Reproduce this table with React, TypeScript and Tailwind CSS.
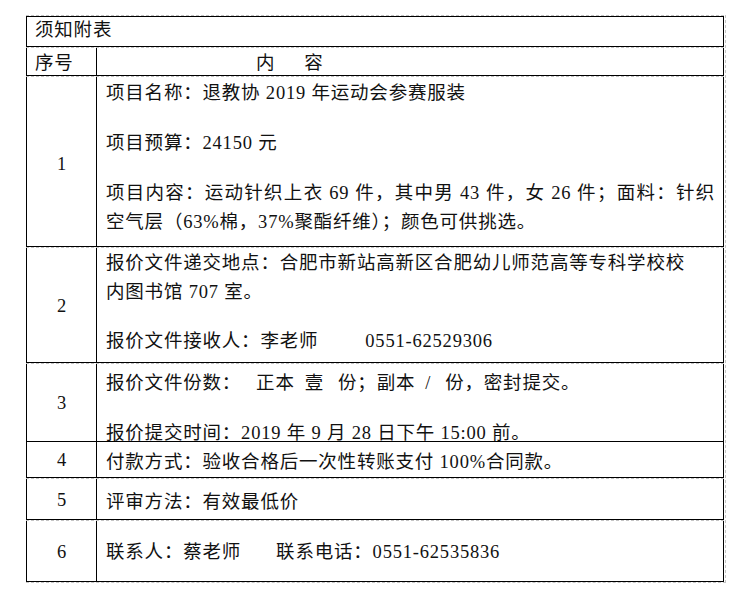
import React from 'react';

// one row: sequence number on the left, content on the right
const Row: React.FC<{
  num: string;
  h: string;
  numPad: string;
  textPad: string;
  last?: boolean;
  children: React.ReactNode;
}> = ({ num, h, numPad, textPad, last, children }) => (
  <div className={`flex ${h} ${last ? '' : 'border-b border-black'}`}>
    <div className={`w-[69px] shrink-0 flex items-center justify-center leading-[29px] tracking-normal ${numPad}`}>{num}</div>
    <div className={`flex-1 border-l border-black pl-[9px] pr-[8px] leading-[29px] ${textPad}`}>{children}</div>
  </div>
);

const Group: React.FC<{ first?: boolean; children: React.ReactNode }> = ({ first, children }) => (
  <div className="border-t border-dashed border-[#c4c4c4]">
    <div className={`border-x border-b border-black ${first ? 'border-t' : ''}`}>{children}</div>
  </div>
);

const Blank: React.FC<{ h?: string }> = ({ h = 'h-[21px]' }) => <div className={h}></div>;

export default function App() {
  return (
    <div className="min-h-screen bg-white pt-[15px] pl-[26px] text-[18.5px] tracking-[0.8px] text-[#111] font-['Liberation_Serif','Noto_Sans_CJK_SC',serif]">
      <div className="w-[700px] border-r border-b border-dashed border-[#c4c4c4] pr-px">
        {/* title */}
        <Group first>
          <div className="h-[29px] pl-[8px] leading-[27px]">须知附表</div>
        </Group>

        {/* column header */}
        <Group>
          <div className="flex h-[27px]">
            <div className="w-[69px] shrink-0 pl-[8px] pt-[1px] leading-[29px]">序号</div>
            <div className="flex-1 border-l border-black pl-[159px] pt-[1px] leading-[29px]">
              内<span className="ml-[29px]">容</span>
            </div>
          </div>
        </Group>

        <Group>
          <Row num="1" h="h-[169px]" numPad="pt-[5px]" textPad="pt-[2px]" last>
            <div>项目名称：退教协 2019 年运动会参赛服装</div>
            <Blank />
            <div>项目预算：24150 元</div>
            <Blank />
            <div className="text-justify [text-align-last:justify]">
              项目内容：运动针织上衣 69 件，其中男 43 件，女 26 件；面料：针织
            </div>
            <div>空气层（63%棉，37%聚酯纤维）；颜色可供挑选。</div>
          </Row>
        </Group>

        <Group>
          <Row num="2" h="h-[114px]" numPad="pt-[2px]" textPad="pt-[1px]" last>
            <div>报价文件递交地点：合肥市新站高新区合肥幼儿师范高等专科学校校</div>
            <div>内图书馆 707 室。</div>
            <Blank h="h-[20px]" />
            <div>
              报价文件接收人：李老师<span className="ml-[47px]">0551-62529306</span>
            </div>
          </Row>
        </Group>

        <Group>
          <Row num="3" h="h-[78px]" numPad="pt-[2px]" textPad="pt-[5px]">
            <div className="whitespace-nowrap">
              报价文件份数：<span className="ml-[15px]">正本</span>
              <span className="ml-[10px]">壹</span>
              <span className="ml-[14px]">份；副本</span>
              <span className="ml-[10px]">/</span>
              <span className="ml-[14px]">份，密封提交。</span>
            </div>
            <Blank />
            <div>报价提交时间：2019 年 9 月 28 日下午 15:00 前。</div>
          </Row>
          <Row num="4" h="h-[35px]" numPad="pt-[2px]" textPad="pt-[6px]" last>
            <div>付款方式：验收合格后一次性转账支付 100%合同款。</div>
          </Row>
        </Group>

        <Group>
          <Row num="5" h="h-[40px]" numPad="pt-[2px]" textPad="pt-[9px]" last>
            <div>评审方法：有效最低价</div>
          </Row>
        </Group>

        <Group>
          <Row num="6" h="h-[60px]" numPad="pt-[2px]" textPad="pt-[17px]" last>
            <div>
              联系人：蔡老师<span className="ml-[35px]">联系电话：0551-62535836</span>
            </div>
          </Row>
        </Group>
      </div>
    </div>
  );
}
